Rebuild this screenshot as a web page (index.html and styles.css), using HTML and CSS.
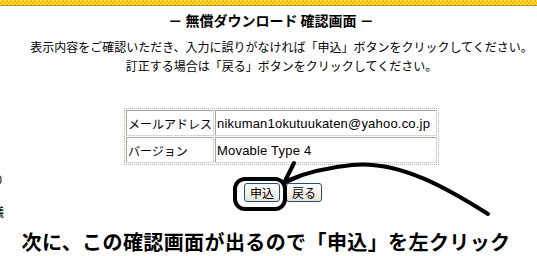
FILE: index.html
```html
<!DOCTYPE html>
<html lang="ja">
<head>
  <meta charset="UTF-8">
  <meta name="viewport" content="width=device-width, initial-scale=1.0">
  <title>無償ダウンロード確認画面</title>
  <link rel="stylesheet" href="styles.css">
</head>
<body>
  <div id="topbar"></div>
  <div id="page">
    <div id="side">
      <span class="frag frag-1">り</span>
      <span class="frag frag-2">議</span>
    </div>
    <div id="main">
      <h1 id="title">－ 無償ダウンロード 確認画面 －</h1>
      <div id="confirm">
        <p id="lead">表示内容をご確認いただき、入力に誤りがなければ「申込」ボタンをクリックしてください。<br>訂正する場合は「戻る」ボタンをクリックしてください。</p>
        <table id="info">
          <tr>
            <td class="label">メールアドレス</td>
            <td class="value">nikuman1okutuukaten@yahoo.co.jp</td>
          </tr>
          <tr>
            <td class="label">バージョン</td>
            <td class="value">Movable Type 4</td>
          </tr>
        </table>
        <div id="btns">
          <button>申込</button>
          <button>戻る</button>
        </div>
      </div>
    </div>
  </div>
  <p id="note">次に、この確認画面が出るので「申込」を左クリック</p>

  <!-- hand drawn marks on top of the screenshot -->
  <svg id="marks" width="537" height="256" viewBox="0 0 537 256">
    <rect x="235" y="179" width="50" height="30" rx="10" ry="10" fill="none" stroke="#000" stroke-width="4"/>
    <path d="M488,214 C450,190 400,160 352,165 C322,168 300,175 286,181" fill="none" stroke="#000" stroke-width="4" stroke-linecap="round"/>
    <path d="M294,163 L284,183 L300,176" fill="none" stroke="#000" stroke-width="4" stroke-linecap="round" stroke-linejoin="round"/>
  </svg>
</body>
</html>
```

FILE: styles.css
```css
body {
  margin: 0;
  width: 537px;
  height: 256px;
  overflow: hidden;
  background: white;
  color: black;
  font-family: "Noto Sans CJK JP", "Liberation Sans", sans-serif;
  font-size: 12px;
  position: relative;
}
#topbar {
  height: 5px;
  border-bottom: 1px solid #c09a00;
  background-color: #ffcc00;
  background-image: repeating-conic-gradient(#ffb400 0 25%, #ffe24a 0 50%);
  background-size: 4px 4px;
}
#page { display: flex; }
#side {
  width: 5px;
  overflow: hidden;
  display: flex;
  flex-direction: column;
}
.frag {
  display: block;
  margin-left: -8px;
  line-height: 12px;
  font-size: 12px;
}
.frag-1 { margin-top: 168px; }
.frag-2 { margin-top: 20px; }

#main { flex: 1; }
#title {
  margin: 5px 0 0;
  font-size: 14px;
  line-height: 18px;
  font-weight: bold;
  text-align: center;
  white-space: pre;
}
#confirm {
  padding-left: 21px;
  text-align: center;
}
#lead {
  margin: 8px 0 0;
  line-height: 19px;
  font-size: 12px;
}
#info {
  margin: 33px auto 0;
  border: 1px dotted #b8b09a;
  border-spacing: 1px;
  text-align: left;
}
#info td {
  border: 1px solid #a8a8a8;
  border-right-color: #d8d8d8;
  border-bottom-color: #d8d8d8;
  height: 24px;
  padding: 0 1px;
  font-size: 12px;
  white-space: nowrap;
}
#info .label { width: 82px; }
#info .value {
  width: 218px;
  font-family: "Liberation Sans", sans-serif;
  font-size: 13px;
  letter-spacing: 0.2px;
}
#btns {
  margin: 18px 0 0 3px;
  display: flex;
  justify-content: center;
  gap: 6px;
}
#btns button {
  height: 19px;
  padding: 0 5px;
  border: 1px solid #1f4f80;
  border-radius: 3px;
  background: linear-gradient(#ffffff, #e6e3d6);
  font-family: "Noto Sans CJK JP", sans-serif;
  font-size: 12px;
  line-height: 16px;
  color: black;
}
#note {
  margin: 12px 0 0;
  padding-right: 5px;
  text-align: center;
  font-size: 20px;
  line-height: 24px;
  font-weight: bold;
  letter-spacing: 0.4px;
}
#marks {
  position: absolute;
  top: 0;
  left: 0;
  pointer-events: none;
}
```
